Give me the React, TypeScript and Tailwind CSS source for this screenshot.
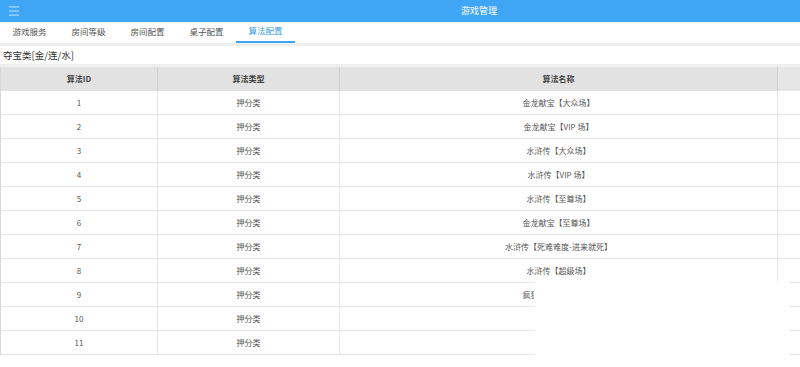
import { Menu } from "lucide-react";

const tabs = ["游戏服务", "房间等级", "房间配置", "桌子配置", "算法配置"];

const rows = [
  { id: 1, type: "押分类", name: "金龙献宝【大众场】" },
  { id: 2, type: "押分类", name: "金龙献宝【VIP 场】" },
  { id: 3, type: "押分类", name: "水浒传【大众场】" },
  { id: 4, type: "押分类", name: "水浒传【VIP 场】" },
  { id: 5, type: "押分类", name: "水浒传【至尊场】" },
  { id: 6, type: "押分类", name: "金龙献宝【至尊场】" },
  { id: 7, type: "押分类", name: "水浒传【死难难度-进来就死】" },
  { id: 8, type: "押分类", name: "水浒传【超级场】" },
  { id: 9, type: "押分类", name: "疯狂赛车【大众场】" },
  { id: 10, type: "押分类", name: "捕鱼达人" },
  { id: 11, type: "押分类", name: "捕鱼达人" },
];

export default function App() {
  return (
    <div
      className="relative w-[800px] h-[367px] overflow-hidden bg-white text-[#444]"
      style={{ fontFamily: '"Noto Sans CJK SC", "Liberation Sans", sans-serif' }}
    >
      {/* top bar */}
      <header className="h-[22px] bg-[#3fa6f6] flex items-center">
        <Menu className="w-[14px] h-[14px] text-white/80 ml-[7px]" strokeWidth={1.5} />
        <span className="ml-[440px] text-[9px] text-white">游戏管理</span>
      </header>

      {/* tabs */}
      <nav className="h-[24px] flex items-end border-b-[3px] border-[#eeeeee]">
        {tabs.map((t, i) => (
          <div
            key={t}
            className={
              i === tabs.length - 1
                ? "w-[59px] h-[24px] flex items-center justify-center text-[8.5px] text-[#3a9be0] border-b-2 border-[#3fa6f6]"
                : "w-[59px] h-[24px] flex items-center justify-center text-[8.5px] text-[#555]"
            }
          >
            {t}
          </div>
        ))}
      </nav>

      {/* section title */}
      <div className="h-[21px] flex items-center px-[3px] text-[9.5px] text-[#333] border-b-[3px] border-[#eeeeee]">
        夺宝类[金/连/水]
      </div>

      {/* table */}
      <div className="border-l border-[#d8d8d8]">
        <div className="grid grid-cols-[157px_182px_438px_1fr] h-[24px] bg-[#e2e2e2] text-[8px] font-bold text-[#444]">
          <div className="flex items-center justify-center border-r border-[#d0d0d0]">算法ID</div>
          <div className="flex items-center justify-center border-r border-[#d0d0d0]">算法类型</div>
          <div className="flex items-center justify-center border-r border-[#d0d0d0]">算法名称</div>
          <div className="bg-[#e6e6e6]" />
        </div>
        {rows.map((r) => (
          <div
            key={r.id}
            className="grid grid-cols-[157px_182px_438px_1fr] h-[24px] border-b border-[#e6e6e6] text-[8px] text-[#555]"
          >
            <div className="flex items-center justify-center border-r border-[#e6e6e6]">{r.id}</div>
            <div className="flex items-center justify-center border-r border-[#e6e6e6]">{r.type}</div>
            <div className="flex items-center justify-center border-r border-[#e6e6e6]">{r.name}</div>
            <div />
          </div>
        ))}
      </div>

      {/* blank patch over the lower right */}
      <div className="absolute left-[534px] top-[281px] w-[255px] h-[86px] bg-white" />
    </div>
  );
}
